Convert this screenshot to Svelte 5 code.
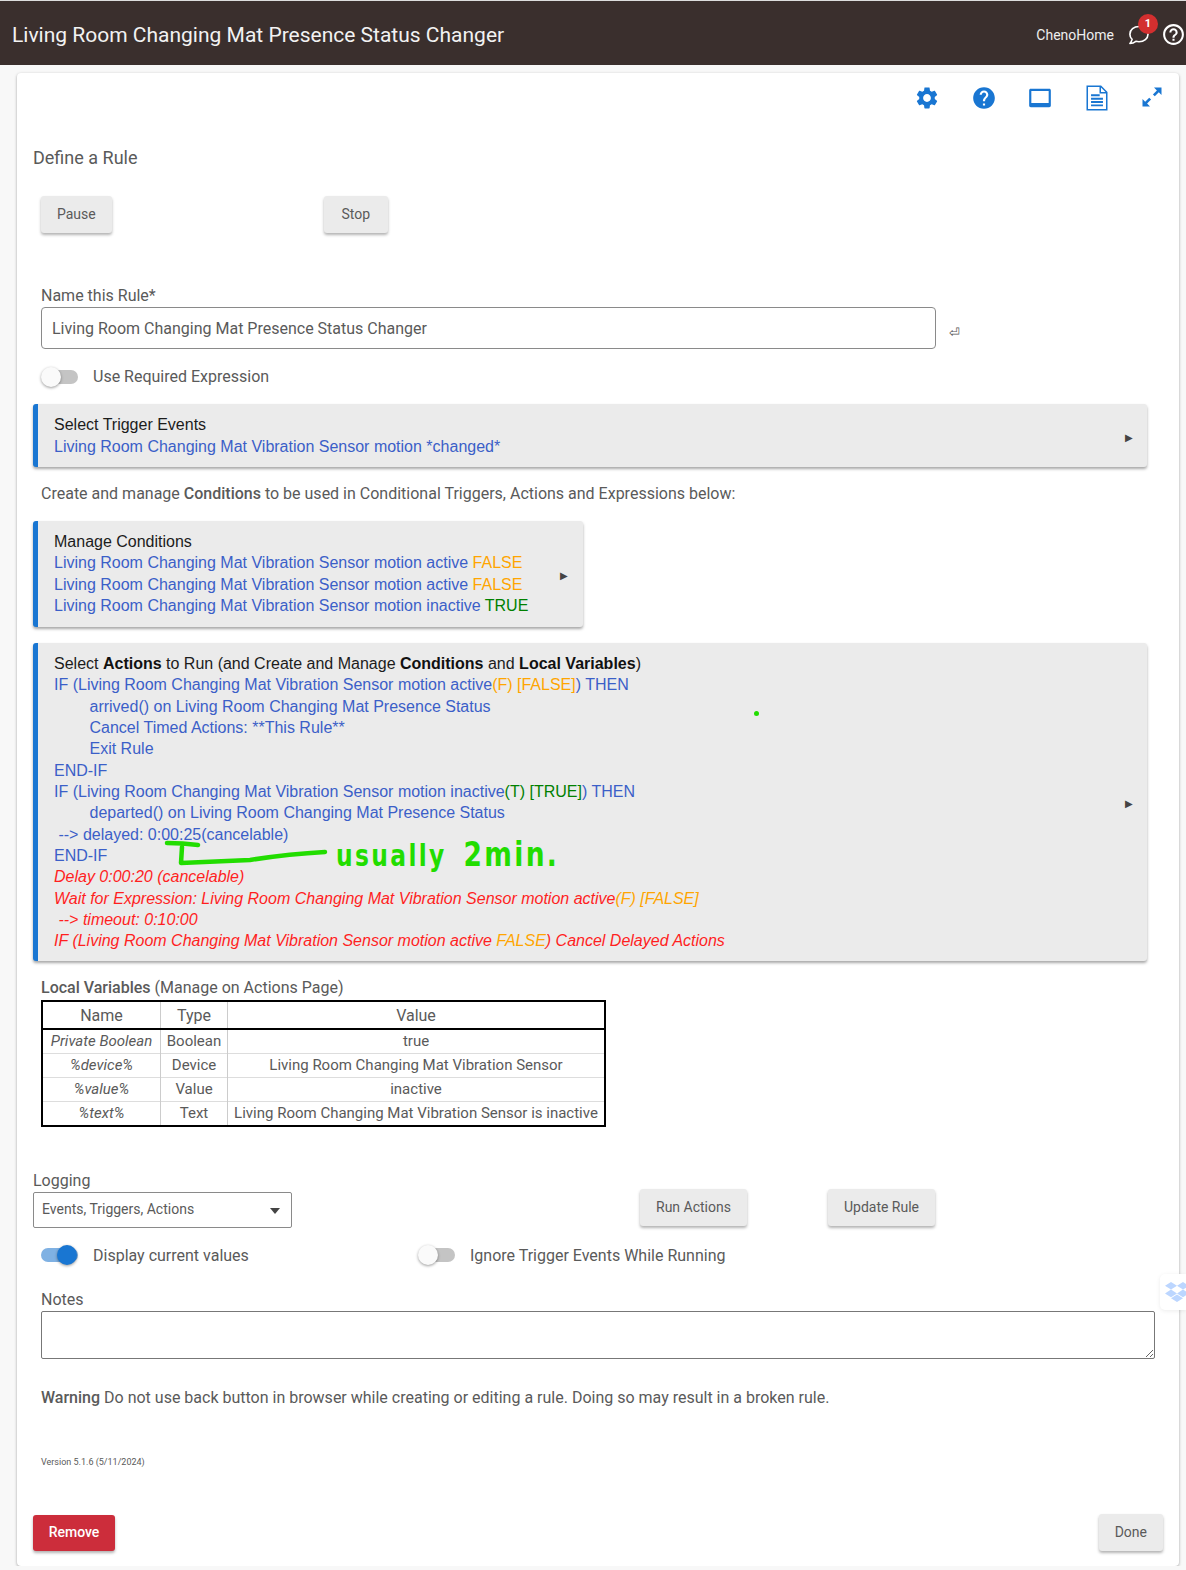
<script>
  const vars = [
    ['Private Boolean', 'Boolean', 'true'],
    ['%device%', 'Device', 'Living Room Changing Mat Vibration Sensor'],
    ['%value%', 'Value', 'inactive'],
    ['%text%', 'Text', 'Living Room Changing Mat Vibration Sensor is inactive']
  ];
</script>

<header class="topbar">
  <div class="title">Living Room Changing Mat Presence Status Changer</div>
  <div class="hub">ChenoHome</div>
  <div class="bubble">
    <svg viewBox="0 0 24 24" width="26" height="26"><path d="M12 4.200c4.600 0 8.300 3 8.300 7 0 3.900-3.700 7-8.300 7-1 0-2-.1-2.900-.4-1.600 1.300-3.500 2-5.500 2.100 1-1.100 1.700-2.400 2-3.800-1.300-1.300-2-3-2-4.900 0-4 3.700-7 8.400-7z" fill="none" stroke="#fff" stroke-width="1.500" stroke-linejoin="round"/></svg>
    <span class="badge">1</span>
  </div>
  <svg class="qm" viewBox="0 0 24 24" width="25" height="25"><path fill="#fff" d="M11 18h2v-2h-2v2zm1-16C6.480 2 2 6.480 2 12s4.480 10 10 10 10-4.480 10-10S17.520 2 12 2zm0 18c-4.410 0-8-3.590-8-8s3.590-8 8-8 8 3.590 8 8-3.590 8-8 8zm0-14c-2.210 0-4 1.790-4 4h2c0-1.100.9-2 2-2s2 .9 2 2c0 2-3 1.750-3 5h2c0-2.250 3-2.500 3-5 0-2.210-1.790-4-4-4z"/></svg>
</header>

<main class="card">
  <div class="toolbar">
    <svg viewBox="0 0 24 24" width="26" height="26"><path fill="#1976d2" d="M19.140 12.940c.04-.3.06-.61.06-.94 0-.32-.02-.64-.07-.94l2.030-1.580c.18-.14.23-.41.12-.61l-1.920-3.320c-.12-.22-.37-.29-.59-.22l-2.390.96c-.5-.38-1.030-.7-1.620-.94l-.36-2.540c-.04-.24-.24-.41-.48-.41h-3.840c-.24 0-.43.17-.47.41l-.36 2.540c-.59.24-1.130.57-1.620.94l-2.390-.96c-.22-.08-.47 0-.59.22L2.740 8.870c-.12.21-.08.47.12.61l2.030 1.580c-.05.3-.09.63-.09.94s.02.64.07.94l-2.030 1.580c-.18.14-.23.41-.12.61l1.920 3.320c.12.22.37.29.59.22l2.390-.96c.5.38 1.030.7 1.620.94l.36 2.540c.05.24.24.41.48.41h3.840c.24 0 .44-.17.47-.41l.36-2.540c.59-.24 1.130-.56 1.620-.94l2.390.96c.22.08.47 0 .59-.22l1.920-3.320c.12-.22.07-.47-.12-.61l-2.010-1.580zM12 15.600c-1.980 0-3.600-1.620-3.600-3.600s1.620-3.600 3.600-3.600 3.600 1.620 3.600 3.600-1.620 3.600-3.600 3.600z"/></svg>
    <svg viewBox="0 0 24 24" width="26" height="26"><path fill="#1976d2" d="M12 2C6.480 2 2 6.480 2 12s4.480 10 10 10 10-4.480 10-10S17.520 2 12 2zm1 17h-2v-2h2v2zm2.070-7.750l-.9.92C13.450 12.900 13 13.500 13 15h-2v-.5c0-1.100.45-2.100 1.170-2.830l1.240-1.260c.37-.36.59-.86.59-1.410 0-1.100-.9-2-2-2s-2 .9-2 2H8c0-2.210 1.790-4 4-4s4 1.790 4 4c0 .88-.36 1.680-.93 2.250z"/></svg>
    <svg viewBox="0 0 24 24" width="26" height="26"><path fill="#1976d2" fill-rule="evenodd" d="M3.500 3.500h17c.9 0 1.500.6 1.500 1.500v14c0 .9-.6 1.500-1.500 1.500h-17c-.9 0-1.500-.6-1.500-1.500V5c0-.9.6-1.500 1.500-1.500zM4 5.500v11h16v-11z"/></svg>
    <svg viewBox="0 0 24 24" width="26" height="26"><path fill="none" stroke="#1976d2" stroke-width="1.400" d="M3 1.200h12.500L21 6.700v16.100H3zM15 1.200v6h6"/><path stroke="#1976d2" stroke-width="1.700" d="M6.500 9.500h8M6.500 12.700h11M6.500 15.700h11M6.500 18.800h11"/></svg>
    <svg viewBox="0 0 26 26" width="26" height="26"><path fill="#1976d2" d="M14 2.500h7.500V10l-2.700-2.700-4 4-1.900-1.900 4-4zM10 21.500H2.500V14l2.700 2.700 4-4 1.900 1.900-4 4z"/></svg>
  </div>

  <h1 class="heading">Define a Rule</h1>

  <div class="btn-row">
    <button>Pause</button>
    <button class="stop">Stop</button>
  </div>

  <label class="field-label name-label" for="rule-name">Name this Rule*</label>
  <div class="name-row">
    <input id="rule-name" value="Living Room Changing Mat Presence Status Changer" />
    <span class="ret">⏎</span>
  </div>

  <div class="toggle-line first">
    <span class="toggle"><span class="knob"></span></span>
    <span class="lift">Use Required Expression</span>
  </div>

  <section class="panel trigger">
    <div class="ink">Select Trigger Events</div>
    <div class="b">Living Room Changing Mat Vibration Sensor motion *changed*</div>
    <span class="arrow">▶</span>
  </section>

  <p class="cond-text">Create and manage <strong>Conditions</strong> to be used in Conditional Triggers, Actions and Expressions below:</p>

  <section class="panel manage">
    <div class="ink">Manage Conditions</div>
    <div class="b">Living Room Changing Mat Vibration Sensor motion active <span class="o">FALSE</span></div>
    <div class="b">Living Room Changing Mat Vibration Sensor motion active <span class="o">FALSE</span></div>
    <div class="b">Living Room Changing Mat Vibration Sensor motion inactive <span class="g">TRUE</span></div>
    <span class="arrow">▶</span>
  </section>

  <section class="panel actions">
    <div class="ink">Select <strong>Actions</strong> to Run (and Create and Manage <strong>Conditions</strong> and <strong>Local Variables</strong>)</div>
    <div class="b">IF (Living Room Changing Mat Vibration Sensor motion active<span class="o">(F) [FALSE]</span>) THEN</div>
    <div class="b ind">arrived() on Living Room Changing Mat Presence Status</div>
    <div class="b ind">Cancel Timed Actions: **This Rule**</div>
    <div class="b ind">Exit Rule</div>
    <div class="b">END-IF</div>
    <div class="b">IF (Living Room Changing Mat Vibration Sensor motion inactive<span class="g">(T) [TRUE]</span>) THEN</div>
    <div class="b ind">departed() on Living Room Changing Mat Presence Status</div>
    <div class="b">&nbsp;--&gt; delayed: 0:00:25(cancelable)</div>
    <div class="b">END-IF</div>
    <div class="r">Delay 0:00:20 (cancelable)</div>
    <div class="r">Wait for Expression: Living Room Changing Mat Vibration Sensor motion active<span class="o">(F) [FALSE]</span></div>
    <div class="r">&nbsp;--&gt; timeout: 0:10:00</div>
    <div class="r">IF (Living Room Changing Mat Vibration Sensor motion active <span class="o">FALSE</span>) Cancel Delayed Actions</div>
    <span class="arrow">▶</span>
    <span class="dot"></span>
    <svg class="stroke" viewBox="0 0 180 40" width="180" height="40"><path d="M4 10 Q20 10 35 12 M19 14 L18 30 L87 27 Q125 21 162 19" fill="none" stroke="#22dd00" stroke-width="4.500" stroke-linecap="round" stroke-linejoin="round"/></svg>
    <span class="scrawl">usually <span class="big">2min.</span></span>
  </section>

  <div class="lv-title"><strong>Local Variables</strong> (Manage on Actions Page)</div>
  <table class="vars">
    <thead><tr><th class="c1">Name</th><th class="c2">Type</th><th>Value</th></tr></thead>
    <tbody>
      {#each vars as v}
        <tr><td class="em">{v[0]}</td><td>{v[1]}</td><td>{v[2]}</td></tr>
      {/each}
    </tbody>
  </table>

  <div class="log-row">
    <div class="log-col">
      <div class="field-label">Logging</div>
      <div class="select">Events, Triggers, Actions<span class="caret"></span></div>
    </div>
    <div class="log-btns">
      <button>Run Actions</button>
      <button>Update Rule</button>
    </div>
  </div>

  <div class="toggle-pair">
    <div class="toggle-line">
      <span class="toggle on"><span class="knob"></span></span>
      <span>Display current values</span>
    </div>
    <div class="toggle-line">
      <span class="toggle"><span class="knob"></span></span>
      <span>Ignore Trigger Events While Running</span>
    </div>
  </div>

  <label class="field-label notes-label" for="notes">Notes</label>
  <textarea id="notes"></textarea>

  <p class="warning"><strong>Warning</strong> Do not use back button in browser while creating or editing a rule. Doing so may result in a broken rule.</p>

  <div class="version">Version 5.1.6 (5/11/2024)</div>

  <div class="footer">
    <button class="remove">Remove</button>
    <button>Done</button>
  </div>
</main>

<aside class="dropbox">
  <svg viewBox="0 0 24 22" width="24" height="22"><path fill="#bcd6ff" d="M6 1l6 3.800-6 3.800L0 4.800zM18 1l6 3.800-6 3.800-6-3.800zM0 12.400l6-3.800 6 3.800-6 3.800zM18 8.600l6 3.800-6 3.800-6-3.800zM6 17.300l6-3.800 6 3.800-6 3.800z"/></svg>
</aside>

<style>
  :global(body) {
    margin: 0;
    background: #f8f8f8;
    font-family: Roboto, "Liberation Sans", sans-serif;
    color: #5a5a5a;
  }
  .topbar {
    height: 65px;
    box-sizing: border-box;
    border-top: 1px solid #ddd;
    background: #3a2f2d;
    display: flex;
    align-items: center;
    color: #fff;
    padding: 3px 0 0 12px;
  }
  .title { font-size: 21px; flex: 1; color: #f2f2f2; }
  .hub { font-size: 14px; margin-right: 12px; color: #eee; }
  .bubble { position: relative; width: 26px; height: 26px; margin-right: 9px; }
  .badge {
    position: absolute; left: 12px; top: -8px;
    width: 20px; height: 20px; border-radius: 50%;
    background: #d32f2f; color: #fff; font-size: 11px; font-weight: 700;
    display: flex; align-items: center; justify-content: center;
  }
  .card {
    margin: 8px 7px 0 17px;
    height: 1493px;
    box-sizing: border-box;
    background: #fff;
    border-radius: 4px;
    box-shadow: 0 1px 3px rgba(0,0,0,.35);
    padding: 12px 16px 0;
    font-size: 16px;
  }
  .toolbar { display: flex; justify-content: flex-end; gap: 30.5px; height: 26px; margin-right: -3px; }
  .heading { font-size: 18px; font-weight: 400; line-height: 24px; margin: 35px 0 0; color: #5a5a5a; }
  button {
    font: 400 14px Roboto, sans-serif;
    color: #5a5a5a;
    background: #ebebeb;
    border: 0;
    border-radius: 3px;
    padding: 0 16px 2px;
    height: 37px;
    box-shadow: 0 2px 3px rgba(0,0,0,.3);
  }
  .stop { padding: 0 18px 2px; }
  .btn-row { display: grid; grid-template-columns: 282.5px auto; justify-items: start; margin: 26px 0 0 8px; }
  .field-label { display: block; line-height: 20px; font-size: 16px; color: #5a5a5a; }
  .name-label { margin: 53px 0 1px 8px; }
  .name-row { display: flex; align-items: center; margin-left: 8px; }
  input {
    width: 895px; height: 42px; box-sizing: border-box;
    border: 1px solid #8a8a8a; border-radius: 4px;
    padding: 0 10px; font: 16px Roboto, sans-serif; color: #5a5a5a; outline: 0;
  }
  .ret { font-size: 13px; margin: 8px 0 0 13px; color: #555; }
  .toggle-line { display: flex; align-items: center; height: 24px; gap: 15px; color: #5a5a5a; }
  .toggle-line.first { margin: 16px 0 0 8px; }
  .lift { margin-top: -2px; }
  .toggle { position: relative; width: 37px; height: 14px; display: block; }
  .toggle::before {
    content: ""; position: absolute; left: 4px; right: 0; top: 0; bottom: 0;
    background: #c4c4c4; border-radius: 7px;
  }
  .knob {
    position: absolute; left: 0; top: -3px; width: 20px; height: 20px; border-radius: 50%;
    background: #fafafa; box-shadow: 0 1px 3px rgba(0,0,0,.4);
  }
  .toggle.on::before { background: #7fb1e3; left: 0; }
  .toggle.on .knob { left: 16px; background: #1976d2; }
  .panel {
    position: relative;
    box-sizing: border-box;
    background: #ebebeb;
    border-left: 5px solid #1976d2;
    border-radius: 3px;
    box-shadow: 0 2px 3px rgba(0,0,0,.35);
    padding: 10px 16px;
    line-height: 21.33px;
    font-family: "Liberation Sans", Arial, sans-serif;
  }
  .cond-text strong, .warning strong, .lv-title strong { font-weight: 500; }
  .panel strong { color: #111; font-weight: 700; }
  .ink { color: #1c1c1c; }
  .b { color: #3b5fc8; }
  .r { color: #ff1f1f; font-style: italic; }
  .o { color: #ffa500; }
  .g { color: #008000; }
  .ind { padding-left: 35.500px; }
  .arrow { position: absolute; right: 14px; top: calc(50% + 2px); transform: translateY(-50%); font-size: 10px; color: #444; }
  .trigger { width: 1114px; margin-top: 15px; height: 63px; line-height: 22px; }
  .cond-text { margin: 15px 0 0 8px; line-height: 24px; }
  .manage { width: 550px; height: 106px; margin-top: 15px; }
  .manage .arrow { right: 15px; }
  .actions { width: 1114px; height: 318px; margin-top: 16px; }
  .dot { position: absolute; left: 716px; top: 68px; width: 5px; height: 5px; border-radius: 50%; background: #22dd00; }
  .stroke { position: absolute; left: 125px; top: 190px; }
  .scrawl {
    position: absolute; left: 298px; top: 191px;
    font: 700 30px "DejaVu Sans", sans-serif;
    letter-spacing: 3px; word-spacing: 8px; color: #22dd00; white-space: nowrap;
    transform-origin: left center; transform: scaleX(.78);
  }
  .big { font-size: 34px; }
  .lv-title { margin: 17px 0 0 8px; line-height: 20px; }
  .vars {
    margin: 2px 0 0 8px; width: 565px; height: 127px;
    border-collapse: collapse; border: 2px solid #000; table-layout: fixed;
    font-size: 15px; text-align: center;
  }
  .vars th { font-weight: 400; font-size: 16px; height: 26px; padding: 0; border-bottom: 2px solid #000; border-right: 1px solid #ccc; }
  .vars th:last-child, .vars td:last-child { border-right: 0; }
  .vars td { padding: 0 0 2px; height: 21px; border-top: 1px solid #ddd; border-right: 1px solid #ccc; }
  .c1 { width: 117px; }
  .c2 { width: 66px; }
  .em { font-style: italic; }
  .log-row { display: flex; align-items: flex-end; margin-top: 44px; }
  .log-col { width: 606.5px; }
  .select {
    position: relative; width: 259px; height: 36px; box-sizing: border-box; margin-top: 1px;
    border: 1px solid #8a8a8a; border-radius: 2px; padding: 0 8px 2px;
    display: flex; align-items: center; font-size: 14px;
  }
  .caret {
    position: absolute; right: 11px; top: 15px;
    border: 5px solid transparent; border-top: 6px solid #444; border-bottom: 0;
  }
  .log-btns { display: flex; gap: 80.5px; margin-bottom: 2px; }
  .log-btns button { padding: 0 16px 2px; }
  .log-btns button:first-child { padding: 0 16.500px 2px; }
  .toggle-pair { display: grid; grid-template-columns: 377px auto; margin: 15px 0 0 8px; }
  .notes-label { margin: 23px 0 0 8px; }
  textarea {
    display: block; margin: 1px 0 0 8px; width: 1114px; height: 48px; box-sizing: border-box;
    border: 1px solid #777; border-radius: 2px; outline: 0; padding: 0; background: #fff;
  }
  .warning { margin: 27px 0 0 8px; line-height: 24px; }
  .version { margin: 46px 0 0 8px; font-size: 9px; line-height: 12px; }
  .footer { display: flex; justify-content: space-between; align-items: flex-start; margin-top: 46px; }
  .remove { background: #cc2d3b; color: #fff; font-weight: 500; height: 36px; width: 82px; padding: 0 0 2px; margin-top: 1px; }
  .dropbox {
    position: absolute; left: 1160px; top: 1274px; width: 26px; height: 36px;
    background: #fff; border-radius: 5px 0 0 5px;
    box-shadow: 0 1px 4px rgba(0,0,0,.08);
    display: flex; align-items: center; padding-left: 5px; box-sizing: border-box; overflow: hidden;
  }
  .dropbox svg { flex: none; }
</style>
